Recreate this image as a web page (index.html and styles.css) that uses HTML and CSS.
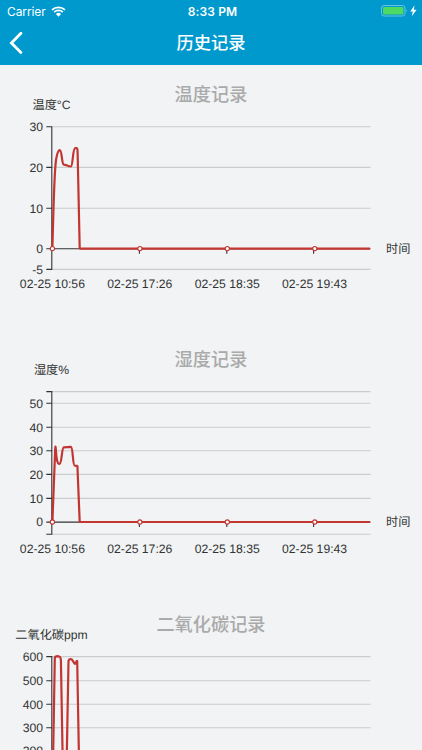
FILE: index.html
```
<!DOCTYPE html>
<html lang="zh-CN">
<head>
    <meta charset="UTF-8">
    <meta name="viewport" content="width=device-width, initial-scale=1.0">
    <title>历史记录</title>
    <link rel="stylesheet" href="styles.css">
</head>
<body>
    <header class="header">
        <div class="status-bar">
            <div class="status-left">
                <span>Carrier</span>
                <svg class="wifi" width="15" height="11" viewBox="0 0 15 11">
                    <path d="M1 3.9a9.4 9.4 0 0 1 13 0M3.2 6.2a6.2 6.2 0 0 1 8.6 0" fill="none" stroke="#fff" stroke-width="1.8"/>
                    <path d="M4.9 8.1a3.7 3.7 0 0 1 5.2 0L7.5 10.7z" fill="#fff"/>
                </svg>
            </div>
            <span class="clock">8:33 PM</span>
            <svg class="battery" width="37" height="13" viewBox="0 0 37 13">
                <rect x=".5" y=".5" width="23.5" height="10.5" rx="2.5" fill="none" stroke="#6cc1e1"/>
                <rect x="2" y="2" width="20.5" height="7.5" rx="1" fill="#4cd964"/>
                <path d="M25.5 3.9q1.4 1.8 0 3.7z" fill="#6cc1e1"/>
                <path d="M33.5 .2l-4.2 6.2h2.5l-1 4.8 4.8-6.4h-2.7z" fill="#fff"/>
            </svg>
        </div>
        <div class="nav-bar">
            <svg class="back" width="14" height="22" viewBox="0 0 14 22">
                <path d="M11.9 1.2L2.4 11l9.5 9.5" fill="none" stroke="#fff" stroke-width="2.8" stroke-linecap="round"/>
            </svg>
            <h1>历史记录</h1>
        </div>
    </header>

    <main>
        <section class="record">
            <h2>温度记录</h2>
            <svg class="chart" width="422" height="220" viewBox="0 45 422 220">
                <path class="grid" d="M52 61.8h318.5M52 102.4h318.5M52 143.3h318.5M52 204.4h318.5"/>
                <path class="axis" d="M51.8 61.3v143.6M46.3 61.8h5.5M46.3 102.4h5.5M46.3 143.3h5.5M46.3 183.8h324.2M46.3 204.4h5.5M139.4 183.8v5M226.8 183.8v5M313.6 183.8v5"/>
                <path class="line" d="M52.4 183.6C53.2 155 54 110 56 95C57.2 88 58.5 85.4 59.7 85.2C62 85 61.7 98.8 63.7 99.6C66 99.4 68 101.4 70.9 101.5C73 101.3 72.6 83.5 75.2 83.2C77 82.8 77.5 82.5 77.6 87L79.7 183.6H370"/>
                <g class="points"><circle cx="52.4" cy="183.6" r="2.1"/><circle cx="139.9" cy="183.6" r="2.1"/><circle cx="227.3" cy="183.6" r="2.1"/><circle cx="314.8" cy="183.6" r="2.1"/></g>
                <text x="51.5" y="44.3" class="name">温度°C</text>
                <g class="ticks"><text x="43" y="66">30</text><text x="43" y="106.7">20</text><text x="43" y="147.6">10</text><text x="43" y="188.1">0</text><text x="43" y="208.7">-5</text></g>
                <g class="dates"><text x="52.4" y="222.6">02-25 10:56</text><text x="139.8" y="222.6">02-25 17:26</text><text x="227.2" y="222.6">02-25 18:35</text><text x="314.6" y="222.6">02-25 19:43</text></g>
                <text x="386" y="188">时间</text>
            </svg>
        </section>

        <section class="record">
            <h2>湿度记录</h2>
            <svg class="chart" width="422" height="220" viewBox="0 45 422 220">
                <path class="grid" d="M52 61.6h318.5M52 73.2h318.5M52 97.3h318.5M52 120.7h318.5M52 144.4h318.5M52 168.4h318.5M52 204.2h318.5"/>
                <path class="axis" d="M51.8 61.1v143.6M46.3 61.6h5.5M46.3 73.2h5.5M46.3 97.3h5.5M46.3 120.7h5.5M46.3 144.4h5.5M46.3 168.4h5.5M46.3 192.1h324.2M46.3 204.2h5.5M139.4 192.1v5M226.8 192.1v5M313.6 192.1v5"/>
                <path class="line" d="M52.4 192L55.2 119C55.5 115.5 55.6 116 55.8 119C56.5 130 57.3 134 59.4 134C62 134 61.6 117.5 63.8 117.3L71 116.8C73 117 72.6 135.3 74.7 135.6L77.4 135.8L79.7 192H370"/>
                <g class="points"><circle cx="52.4" cy="192" r="2.1"/><circle cx="139.9" cy="192" r="2.1"/><circle cx="227.3" cy="192" r="2.1"/><circle cx="314.8" cy="192" r="2.1"/></g>
                <text x="51.5" y="44.3" class="name">湿度%</text>
                <g class="ticks"><text x="43" y="77.5">50</text><text x="43" y="101.6">40</text><text x="43" y="125">30</text><text x="43" y="148.7">20</text><text x="43" y="172.7">10</text><text x="43" y="196.4">0</text></g>
                <g class="dates"><text x="52.4" y="222.6">02-25 10:56</text><text x="139.8" y="222.6">02-25 17:26</text><text x="227.2" y="222.6">02-25 18:35</text><text x="314.6" y="222.6">02-25 19:43</text></g>
                <text x="386" y="196.3">时间</text>
            </svg>
        </section>

        <section class="record">
            <h2>二氧化碳记录</h2>
            <svg class="chart" width="422" height="220" viewBox="0 45 422 220">
                <path class="grid" d="M52 61.6h318.5M52 85.7h318.5M52 109.3h318.5M52 132.7h318.5M52 156.6h318.5M52 180.4h318.5M52 204.2h318.5"/>
                <path class="axis" d="M51.8 61.1v143.6M46.3 61.6h5.5M46.3 85.7h5.5M46.3 109.3h5.5M46.3 132.7h5.5M46.3 156.6h5.5M46.3 180.4h5.5M46.3 204.2h324.2"/>
                <path class="line" d="M52.4 204L54.8 63C55 61.4 56 61.2 57.6 61.2C59.5 61.3 60.7 61.5 60.9 65L63.4 204H66L68.5 66C68.8 64.2 69.5 64 70.8 64.2C73 64.3 73.6 68.5 75 68.8C76 68 76.5 65.5 77.2 66L79.7 204H370"/>
                <text x="51.5" y="44.3" class="name">二氧化碳ppm</text>
                <g class="ticks"><text x="43" y="65.9">600</text><text x="43" y="90">500</text><text x="43" y="113.6">400</text><text x="43" y="137">300</text><text x="43" y="160.4">200</text></g>
            </svg>
        </section>
    </main>
</body>
</html>
```
FILE: styles.css
```
* {
    box-sizing: border-box;
}

body {
    margin: 0;
    height: 750px;
    overflow: hidden;
    background: #f1f3f5;
    font-family: "Liberation Sans", "Noto Sans CJK SC", sans-serif;
}

.header {
    height: 65px;
    background: #0099cd;
    color: #fff;
}

.status-bar {
    display: grid;
    grid-template-columns: 1fr auto 1fr;
    align-items: center;
    height: 22px;
    padding: 0 4px 0 7px;
    font-family: Inter, sans-serif;
    font-size: 12px;
}

.status-left {
    display: flex;
    align-items: center;
    gap: 5px;
    letter-spacing: -0.1px;
}

.clock {
    font-weight: 600;
    letter-spacing: 0.15px;
}

.battery {
    justify-self: end;
}

.nav-bar {
    display: grid;
    grid-template-columns: 1fr auto 1fr;
    align-items: center;
    height: 42px;
    padding: 0 9px;
}

.nav-bar h1 {
    margin: 0;
    font-size: 17.3px;
    font-weight: 500;
    line-height: 24px;
}

.record {
    height: 265px;
}

.record h2 {
    height: 45px;
    margin: 0;
    padding-top: 17px;
    color: #aaa;
    font-size: 18.2px;
    font-weight: 500;
    line-height: 26px;
    text-align: center;
}

.chart {
    display: block;
    overflow: visible;
    fill: #333;
    font-size: 12.2px;
    text-rendering: geometricPrecision;
}

.grid {
    fill: none;
    stroke: #ccc;
    stroke-width: 1.1;
}

.axis {
    fill: none;
    stroke: #333;
    stroke-width: 1.1;
}

.line {
    fill: none;
    stroke: #c23531;
    stroke-width: 2.2;
    stroke-linejoin: bevel;
}

.points {
    fill: #fff;
    stroke: #c23531;
    stroke-width: 1.1;
}

.name, .dates {
    text-anchor: middle;
}

.ticks {
    text-anchor: end;
}
```
